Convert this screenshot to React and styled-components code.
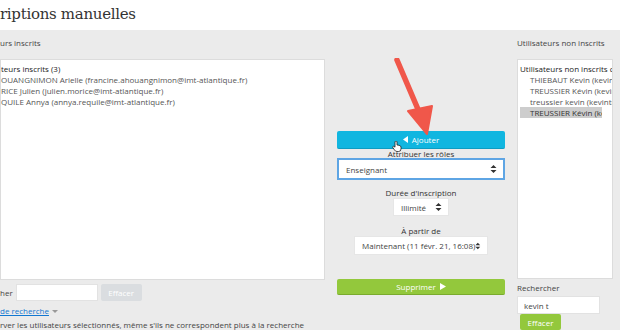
import React from 'react'
import styled, { createGlobalStyle } from 'styled-components'

const Global = createGlobalStyle`
  html, body { margin: 0; padding: 0; background: #fff; }
  body { width: 630px; height: 330px; overflow: hidden; font-family: "Open Sans", "DejaVu Sans", sans-serif; }
`

const enrolled = [
  'OUANGNIMON Arielle (francine.ahouangnimon@imt-atlantique.fr)',
  'RICE Julien (julien.morice@imt-atlantique.fr)',
  'QUILE Annya (annya.requile@imt-atlantique.fr)',
]

const candidates = [
  'THIEBAUT Kevin (kevin',
  'TREUSSIER Kévin (kevir',
  'treussier kevin (kevintr',
  'TREUSSIER Kévin (kevi',
]

function Arrows() {
  return (
    <svg width="7" height="8" viewBox="0 0 7 8">
      <path d="M3.5 0 L6.5 3 H0.5Z M3.5 8 L6.5 5 H0.5Z" fill="#333" />
    </svg>
  )
}

export default function App() {
  return (
    <Page>
      <Global />
      <Header>
        <Title>riptions manuelles</Title>
      </Header>
      <Main>
        <LeftCol>
          <ColLabel>urs inscrits</ColLabel>
          <ListBox>
            <GroupLabel $flush>teurs inscrits (3)</GroupLabel>
            {enrolled.map((t) => (
              <Item key={t} $flush>{t}</Item>
            ))}
          </ListBox>
          <SearchRow>
            <span>her</span>
            <SearchInput style={{ width: 82 }} />
            <SmallButton disabled>Effacer</SmallButton>
          </SearchRow>
          <OptionsLink>
            <u>de recherche </u>
            <Caret />
          </OptionsLink>
          <Note>rver les utilisateurs sélectionnés, même s'ils ne correspondent plus à la recherche</Note>
        </LeftCol>

        <MidCol>
          <WideButton $color="#10b6e0" $dark="#0d9cc2" $h={18}>
            <svg width="5" height="7" viewBox="0 0 5 7"><path d="M5 0 V7 L0 3.5Z" fill="#fff" /></svg>
            Ajouter
          </WideButton>
          <FieldLabel $gap={0}>Attribuer les rôles</FieldLabel>
          <Select $focused $width={168}>
            <span>Enseignant</span>
            <Arrows />
          </Select>
          <FieldLabel $gap={8}>Durée d'inscription</FieldLabel>
          <Select $width={56} $h={18}>
            <span>Illimité</span>
            <Arrows />
          </Select>
          <FieldLabel $gap={10}>À partir de</FieldLabel>
          <Select $width={134} $h={19}>
            <span>Maintenant (11 févr. 21, 16:08)</span>
            <Arrows />
          </Select>
          <WideButton $color="#93c83c" $dark="#7aab2d" $h={16} style={{ marginTop: 24 }}>
            Supprimer
            <svg width="6" height="7" viewBox="0 0 6 7"><path d="M0 0 V7 L6 3.5Z" fill="#fff" /></svg>
          </WideButton>
        </MidCol>

        <RightCol>
          <ColLabel>Utilisateurs non inscrits</ColLabel>
          <ListBox>
            <GroupLabel>Utilisateurs non inscrits c</GroupLabel>
            {candidates.map((t, i) => (
              <Item key={i} $selected={i === 3}>{t}</Item>
            ))}
          </ListBox>
          <RightSearch>
            <span>Rechercher</span>
            <SearchInput defaultValue="kevin t" style={{ width: 83, height: 18 }} />
            <SmallButton $green>Effacer</SmallButton>
          </RightSearch>
        </RightCol>

        <Pointer width="46" height="80" viewBox="0 0 46 80">
          <path d="M3 2 L26 56" stroke="#f0574a" strokeWidth="5.5" strokeLinecap="round" />
          <path d="M14 53 L38 48 L33 76Z" fill="#f0574a" stroke="#f0574a" strokeWidth="2" strokeLinejoin="round" />
        </Pointer>
        <Hand width="10" height="11" viewBox="0 0 10 11">
          <path d="M3 1 Q3 0 4 0 Q5 0 5 1 V4 L7 4.3 Q9 4.8 9 6 V8 Q9 10.5 6.5 10.5 H5 Q3.5 10.5 2.5 9 L0.8 6.5 Q0.3 5.6 1.2 5.3 Q2 5 3 6.2Z" fill="#fff" stroke="#222" strokeWidth="0.8" />
        </Hand>
      </Main>
    </Page>
  )
}

const Page = styled.div`
  width: 630px;
  height: 330px;
  overflow: hidden;
  background: #fff;
`

const Header = styled.div`
  height: 30px;
  display: flex;
  align-items: center;
`

const Title = styled.h2`
  margin: 0;
  margin-top: -2px;
  font-family: "DejaVu Serif", serif;
  font-weight: 400;
  font-size: 15px;
  color: #333;
  letter-spacing: -0.3px;
`

const Main = styled.div`
  position: relative;
  width: 620px;
  height: 300px;
  background: #ebebeb;
  display: flex;
  gap: 12px;
  font-size: 8px;
  color: #555;
`

const Column = styled.div`
  display: flex;
  flex-direction: column;
`

const LeftCol = styled(Column)`
  width: 325px;
`

const RightCol = styled(Column)`
  width: 96px;
`

const MidCol = styled(Column)`
  width: 168px;
  align-items: center;
  padding-top: 101px;
`

const ColLabel = styled.div`
  height: 30px;
  line-height: 26px;
  color: #444;
  white-space: nowrap;
`

const ListBox = styled.div`
  height: 225px;
  background: #fff;
  border: 1px solid #dcdcdc;
  box-sizing: border-box;
  padding-top: 3px;
  overflow: hidden;
`

const GroupLabel = styled.div`
  line-height: 11px;
  color: #222;
  white-space: nowrap;
  padding-left: ${(p) => (p.$flush ? '0' : '2px')};
`

const Item = styled.div`
  line-height: 11px;
  white-space: nowrap;
  color: ${(p) => (p.$selected ? '#333' : '#555')};
  background: ${(p) => (p.$selected ? '#cdcdcd' : 'transparent')};
  width: ${(p) => (p.$selected ? '72px' : 'auto')};
  margin-left: ${(p) => (p.$selected ? '2px' : '0')};
  padding-left: ${(p) => (p.$flush ? '0' : p.$selected ? '10px' : '12px')};
  overflow: hidden;
`

const SearchRow = styled.div`
  display: flex;
  align-items: center;
  gap: 3px;
  margin-top: 4px;
  color: #444;
`

const SearchInput = styled.input`
  height: 17px;
  box-sizing: border-box;
  border: 1px solid #e2e2e2;
  background: #fff;
  font: inherit;
  font-size: 8px;
  color: #444;
  padding: 0 6px;
  outline: none;
`

const SmallButton = styled.button`
  height: ${(p) => (p.$green ? '16px' : '17px')};
  width: 41px;
  border: none;
  border-radius: 2px;
  font: inherit;
  font-size: 8px;
  color: #fff;
  background: ${(p) => (p.$green ? '#93c83c' : '#dadde0')};
  padding: 0;
`

const OptionsLink = styled.div`
  margin-top: 4px;
  line-height: 12px;
  color: #1177d1;
  display: flex;
  align-items: center;
  gap: 3px;
`

const Caret = styled.span`
  width: 0;
  height: 0;
  border-left: 3px solid transparent;
  border-right: 3px solid transparent;
  border-top: 3px solid #999;
`

const Note = styled.div`
  margin-top: 2px;
  line-height: 11px;
  white-space: nowrap;
  color: #444;
`

const WideButton = styled.div`
  width: 168px;
  height: ${(p) => p.$h}px;
  flex-shrink: 0;
  box-sizing: border-box;
  border-radius: 2px;
  background: ${(p) => p.$color};
  border-bottom: 1.5px solid ${(p) => p.$dark};
  color: #fff;
  display: flex;
  align-items: center;
  justify-content: center;
  gap: 4px;
  font-size: 8px;
`

const FieldLabel = styled.div`
  margin-top: ${(p) => p.$gap}px;
  line-height: 9px;
  color: #333;
  font-size: 8px;
`

const Select = styled.div`
  width: ${(p) => p.$width}px;
  height: ${(p) => (p.$focused ? 22 : p.$h)}px;
  flex-shrink: 0;
  margin-top: ${(p) => (p.$focused ? '0' : '1px')};
  box-sizing: border-box;
  background: #fff;
  border: ${(p) => (p.$focused ? '2px solid #5ea5e4' : '1px solid #e6e6e6')};
  display: flex;
  align-items: center;
  justify-content: space-between;
  padding: 0 6px 0 7px;
  color: #444;
  font-size: 8px;
  white-space: nowrap;
`

const RightSearch = styled.div`
  display: flex;
  flex-direction: column;
  align-items: flex-start;
  color: #444;
  span { line-height: 12px; margin-top: 3px; margin-bottom: 2px; }
  button { margin-left: 3px; }
`

const Pointer = styled.svg`
  position: absolute;
  left: 394px;
  top: 28px;
`

const Hand = styled.svg`
  position: absolute;
  left: 392px;
  top: 111px;
`
